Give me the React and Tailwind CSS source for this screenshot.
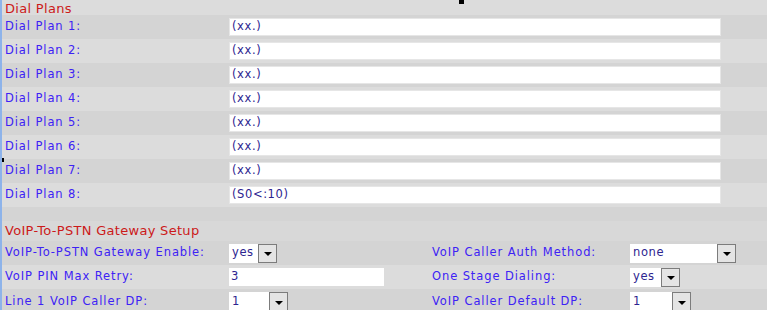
const dialPlans = [
    "(xx.)",
    "(xx.)",
    "(xx.)",
    "(xx.)",
    "(xx.)",
    "(xx.)",
    "(xx.)",
    "(S0<:10)",
];

const label = "text-[11.5px] tracking-[0.9px] text-[#3d22f5]";
const value = "text-[11.5px] tracking-[0.6px] text-[#2d2490]";

const Select = ({ text, boxW }) => (
    <div className="flex items-center h-[19px]">
        <div className={`h-[19px] bg-white flex items-center pl-[3px] ${boxW} ${value}`}>
            {text}
        </div>
        <div className="w-[19px] h-[19px] bg-[#e4e4e4] border border-[#7c7c7c] flex items-center justify-center">
            <span className="block w-0 h-0 border-l-[4px] border-r-[4px] border-t-[4px] border-l-transparent border-r-transparent border-t-black mt-[2px]"></span>
        </div>
    </div>
);

const Row = ({ dark, children, h = "h-[24px]" }) => (
    <div className={`${h} flex items-center ${dark ? "bg-[#d4d4d4]" : "bg-[#dcdcdc]"}`}>
        {children}
    </div>
);

export default function App() {
    return (
        <div
            className="relative w-[767px] h-[310px] overflow-hidden bg-[#dcdcdc] border-l-2 border-[#8db3ea]"
            style={{ fontFamily: '"DejaVu Sans", Verdana, sans-serif' }}
        >
            {/* stray marks from the capture */}
            <div className="absolute left-[457px] top-0 w-[5px] h-[4px] bg-black"></div>
            <div className="absolute left-[-2px] top-[158px] w-[4px] h-[4px] bg-black"></div>

            {/* Dial Plans */}
            <div className="h-[15px] flex items-end pl-[3px]">
                <span className="text-[13px] leading-[15px] tracking-[0.3px] text-[#cc1a1a] -mb-[1px]">
                    Dial Plans
                </span>
            </div>
            {dialPlans.map((plan, i) => (
                <Row key={i} dark={i % 2 === 0}>
                    <div className={`w-[227px] pl-[3px] ${label}`}>Dial Plan {i + 1}:</div>
                    <div className={`w-[492px] h-[18px] bg-white border border-[#e6e6e6] flex items-center pl-[2px] ${value}`}>
                        {plan}
                    </div>
                </Row>
            ))}

            {/* VoIP-To-PSTN Gateway Setup */}
            <div className="h-[14px] bg-[#d4d4d4]"></div>
            <div className="h-[20px] flex items-center pl-[3px] bg-[#d8d8d8]">
                <span className="text-[13px] tracking-[0.3px] text-[#cc1a1a]">
                    VoIP-To-PSTN Gateway Setup
                </span>
            </div>
            <Row dark>
                <div className={`w-[227px] pl-[3px] ${label}`}>VoIP-To-PSTN Gateway Enable:</div>
                <div className="w-[203px]">
                    <Select text="yes" boxW="w-[29px]" />
                </div>
                <div className={`w-[198px] ${label}`}>VoIP Caller Auth Method:</div>
                <Select text="none" boxW="w-[87px]" />
            </Row>
            <Row>
                <div className={`w-[227px] pl-[3px] ${label}`}>VoIP PIN Max Retry:</div>
                <div className="w-[203px]">
                    <div className={`w-[155px] h-[18px] bg-white flex items-center pl-[2px] ${value}`}>3</div>
                </div>
                <div className={`w-[198px] ${label}`}>One Stage Dialing:</div>
                <Select text="yes" boxW="w-[31px]" />
            </Row>
            <Row dark h="h-[25px]">
                <div className={`w-[227px] pl-[3px] ${label}`}>Line 1 VoIP Caller DP:</div>
                <div className="w-[203px]">
                    <Select text="1" boxW="w-[40px]" />
                </div>
                <div className={`w-[198px] ${label}`}>VoIP Caller Default DP:</div>
                <Select text="1" boxW="w-[42px]" />
            </Row>
        </div>
    );
}
